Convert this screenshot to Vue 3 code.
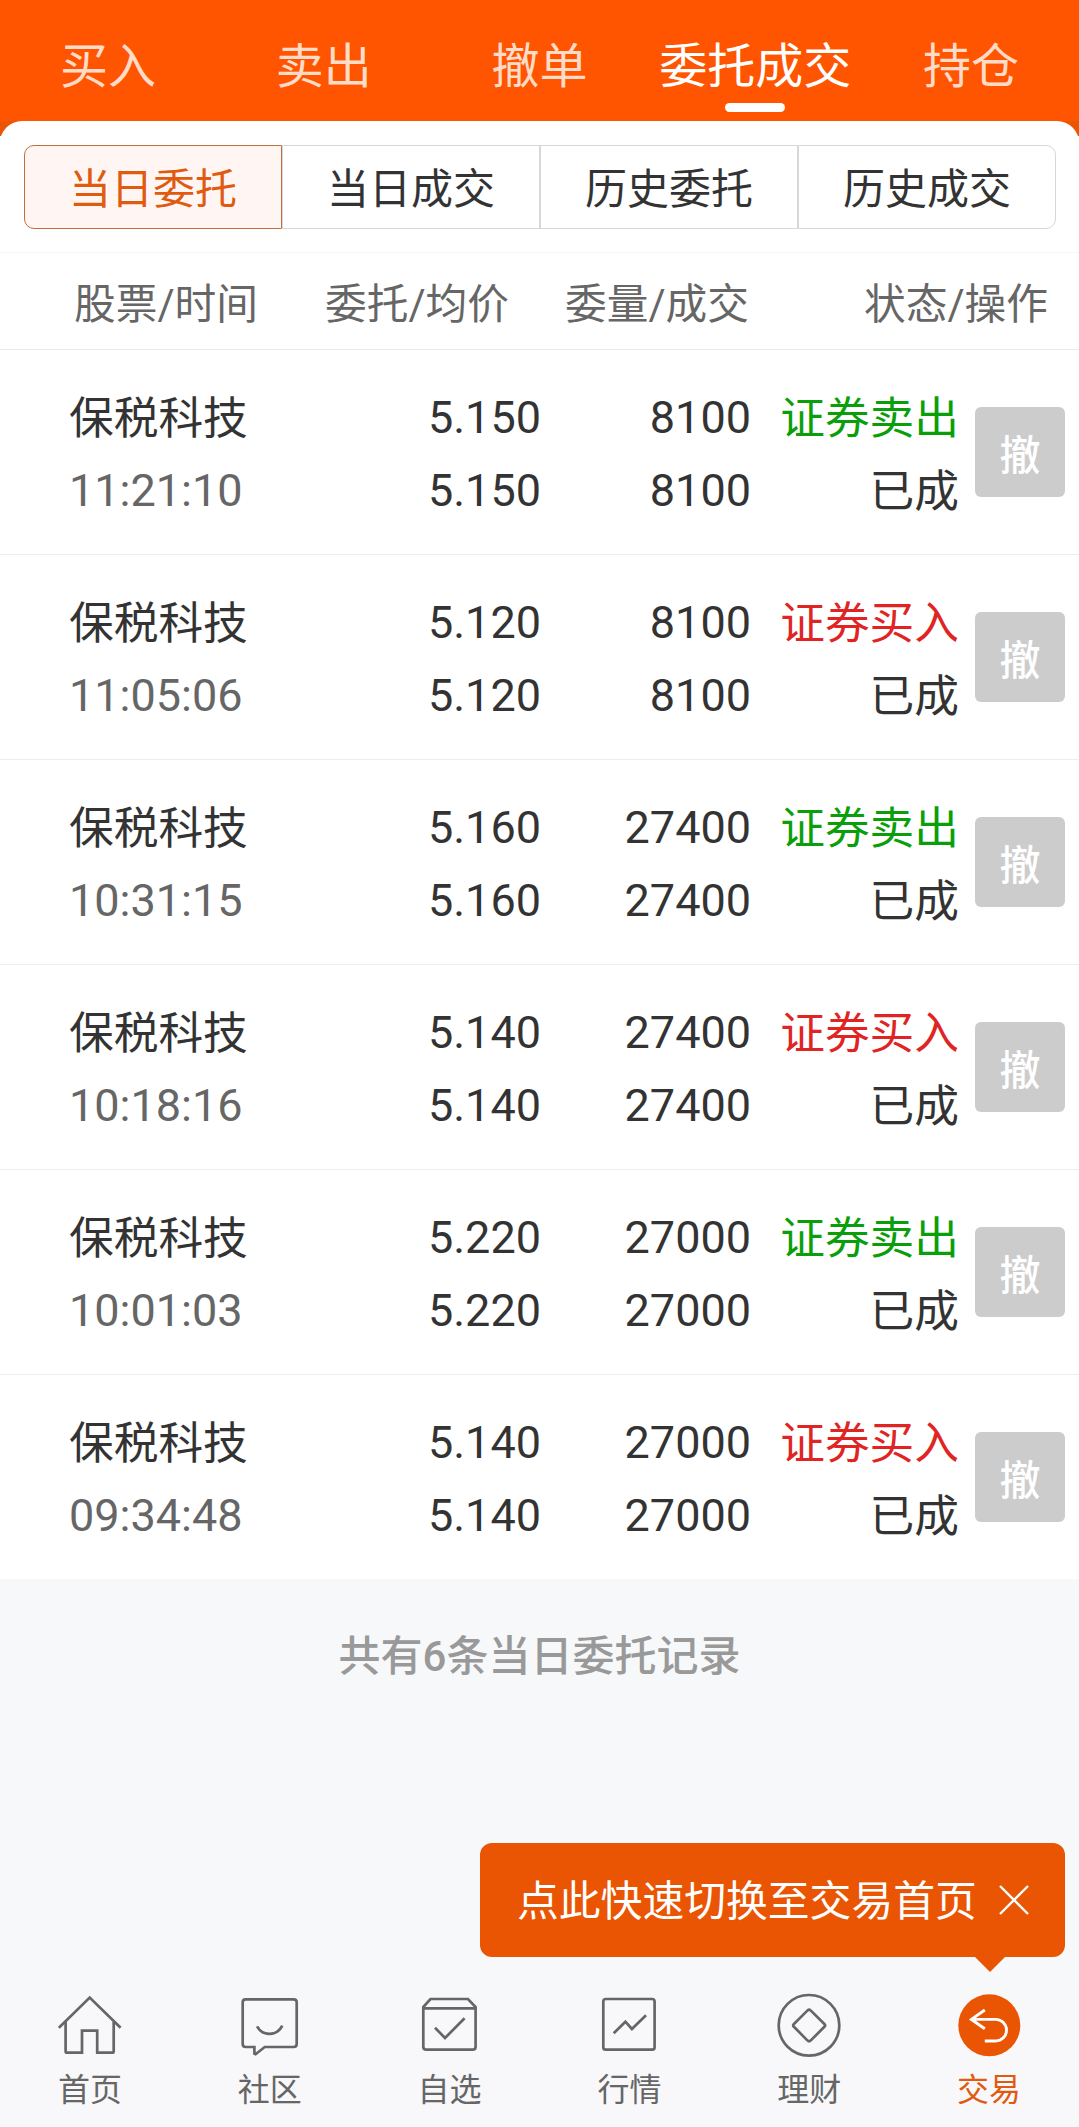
<template>
  <div class="page">
    <header class="top">
      <button
        v-for="t in tabs"
        :key="t"
        class="tab"
        :class="{ active: t === activeTab }"
        @click="activeTab = t"
      >{{ t }}</button>
    </header>

    <div class="corners"><div class="sheet-top"></div></div>

    <main class="sheet">
      <div class="segment">
        <button
          v-for="s in segments"
          :key="s"
          :class="{ active: s === activeSegment }"
          @click="activeSegment = s"
        >{{ s }}</button>
      </div>

      <div class="list-head">
        <span v-for="c in columns" :key="c">{{ c }}</span>
      </div>

      <div v-for="o in orders" :key="o.time" class="order">
        <div class="cell left">
          <div class="cjk">保税科技</div>
          <div class="muted">{{ o.time }}</div>
        </div>
        <div class="cell">
          <div>{{ o.price }}</div>
          <div>{{ o.price }}</div>
        </div>
        <div class="cell">
          <div>{{ o.amount }}</div>
          <div>{{ o.amount }}</div>
        </div>
        <div class="cell">
          <div class="cjk" :class="o.side">{{ o.side === 'sell' ? '证券卖出' : '证券买入' }}</div>
          <div class="cjk">已成</div>
        </div>
        <button class="cancel" disabled>撤</button>
      </div>
    </main>

    <p class="summary">共有{{ orders.length }}条当日委托记录</p>

    <footer class="bottom">
      <div v-if="showTip" class="tip">
        <span>点此快速切换至交易首页</span>
        <svg class="close" viewBox="0 0 30 30" @click="showTip = false">
          <path d="M1 1L29 29M29 1L1 29" />
        </svg>
      </div>

      <nav class="nav">
        <a class="nav-item">
          <svg viewBox="0 0 64 64">
            <path d="M.9 34.8L31.7 4.6L62.6 34.8" />
            <path d="M7.6 29V58.2Q7.6 59.7 9.1 59.7H24V37.7H39.2V59.7H54.2Q55.7 59.7 55.7 58.2V29" />
          </svg>
          <span>首页</span>
        </a>
        <a class="nav-item">
          <svg viewBox="0 0 64 64">
            <path d="M7.7 6.3H55.7Q58.7 6.3 58.7 9.3V51Q58.7 54 55.7 54H26.7L17.6 61.2L16.4 60.6V54H7.7Q4.7 54 4.7 51V9.3Q4.7 6.3 7.7 6.3Z" />
            <path d="M19.1 33.4C24.5 43.4 38.9 43.4 44.3 32.6" />
          </svg>
          <span>社区</span>
        </a>
        <a class="nav-item">
          <svg viewBox="0 0 64 64">
            <path d="M5.3 14L12.5 6H50L57.6 14V53.7Q57.6 56.7 54.6 56.7H8.3Q5.3 56.7 5.3 53.7ZM5.3 15.3H57.6" />
            <path d="M17 34.7L27 45L46.6 25.3" />
          </svg>
          <span>自选</span>
        </a>
        <a class="nav-item">
          <svg viewBox="0 0 64 64">
            <rect x="6.3" y="6" width="51.3" height="50.7" rx="2.5" />
            <path d="M16.7 40.3L28.4 28.7L34.9 36L49 22.2" />
          </svg>
          <span>行情</span>
        </a>
        <a class="nav-item">
          <svg viewBox="0 0 64 64">
            <circle cx="32" cy="32.3" r="30.3" />
            <path d="M30.6 17.4Q32.1 16 33.6 17.4L47.4 31Q48.8 32.4 47.4 33.8L33.6 47.6Q32.1 49 30.6 47.6L16.9 33.8Q15.5 32.4 16.9 31Z" />
          </svg>
          <span>理财</span>
        </a>
        <a class="nav-item current">
          <svg viewBox="0 0 64 64">
            <circle class="disc" cx="32.3" cy="32.3" r="31" />
            <path class="back" d="M27.8 17L14.4 26.4L27.8 35.7M14.4 26.4H38.7A10.8 10.8 0 0 1 38.7 48H27.8" />
          </svg>
          <span>交易</span>
        </a>
      </nav>
    </footer>
  </div>
</template>

<script setup>
import { ref } from 'vue';

const tabs = ['买入', '卖出', '撤单', '委托成交', '持仓'];
const segments = ['当日委托', '当日成交', '历史委托', '历史成交'];
const columns = ['股票/时间', '委托/均价', '委量/成交', '状态/操作'];

const activeTab = ref('委托成交');
const activeSegment = ref('当日委托');
const showTip = ref(true);

const orders = [
  { time: '11:21:10', price: '5.150', amount: 8100, side: 'sell' },
  { time: '11:05:06', price: '5.120', amount: 8100, side: 'buy' },
  { time: '10:31:15', price: '5.160', amount: 27400, side: 'sell' },
  { time: '10:18:16', price: '5.140', amount: 27400, side: 'buy' },
  { time: '10:01:03', price: '5.220', amount: 27000, side: 'sell' },
  { time: '09:34:48', price: '5.140', amount: 27000, side: 'buy' },
];
</script>

<style>
body{ margin:0; background:#f7f8fa;}
</style>

<style scoped>
.page{ display:flex; flex-direction:column; height:2127px; background:#f7f8fa; color:#333; font-family: Roboto, "Noto Sans CJK SC", sans-serif;}
button{ margin:0; padding:0; border:0; background:none; font:inherit; color:inherit;}

.top{ display:grid; grid-template-columns:repeat(5, 1fr); height:121px; background:#ff5500;}
.tab{ position:relative; height:121px; padding-top:12px; box-sizing:border-box; font-size:48px; line-height:109px; white-space:nowrap; color:#ffdbc8;}
.tab.active{ color:#fff;}
.tab.active::after{ content:""; position:absolute; left:50%; top:103px; width:60px; height:9px; margin-left:-30px; border-radius:5px; background:#fff;}

.corners{ height:15px; background:#ea5504; overflow:hidden;}
.sheet-top{ height:30px; border-radius:22px 22px 0 0; background:#fff;}

.sheet{ background:#fff;}
.segment{ display:grid; grid-template-columns:repeat(4, 1fr); height:84px; margin:0 23px 0 24px; padding:9px 0 23px;}
.segment button{ padding-top:6px; border:1px solid #d5d7d9; font-size:42px; line-height:76px;}
.segment button:first-child{ border-radius:10px 0 0 10px;}
.segment button:last-child{ border-radius:0 10px 10px 0;}
.segment .active{ border-color:#c0703f; background:#fff6f3; color:#e05a10;}

.list-head{ display:grid; grid-template-columns:258px 251px 240px 299px; height:96px; border-top:1px solid #f5f5f5; border-bottom:1px solid #ebebeb; font-size:41.7px; line-height:103px; text-align:right; color:#666;}

.order{ display:grid; grid-template-columns:232px 240px 210px 208px 90px; box-sizing:border-box; height:205px; padding:31px 14px 0 69px; border-bottom:1px solid #ededed; font-size:45px; line-height:73px;}
.order:last-child{ border-bottom-color:#f7f8fa;}
.cell{ text-align:right; white-space:nowrap;}
.cjk{ padding-top:4px; font-size:44.7px; line-height:69px;}
.left{ text-align:left;}
.muted{ color:#666;}
.sell{ color:#0a9f0a;}
.buy{ color:#e02424;}
.cancel{ width:90px; height:90px; margin:26px 0 0 16px; border-radius:6px; background:#ccc; color:#fff; font-size:41px; font-weight:500; line-height:90px; padding-top:4px;}

.summary{ margin:50px 0 0; font-size:42px; font-weight:500; line-height:54px; text-align:center; color:#999;}

.bottom{ position:relative; margin-top:auto; padding-bottom:17px; background:#f8f8fa;}
.tip{ position:absolute; right:14px; bottom:170px; display:flex; align-items:center; box-sizing:border-box; width:585px; height:114px; padding:0 36px 0 37px; justify-content:space-between; border-radius:12px; background:#ea5504; color:#fff; font-size:41.8px;}
.tip span{ padding-bottom:5px;}
.tip::after{ content:""; position:absolute; right:60px; top:100%; border:15px solid transparent; border-top-color:#ea5504; border-bottom:0;}
.close{ width:30px; height:30px; fill:none; stroke:#fff; stroke-width:2.4;}

.nav{ display:grid; grid-template-columns:repeat(6, 1fr);}
.nav-item{ display:flex; flex-direction:column; align-items:center; color:#666; font-size:32px; line-height:40px;}
.nav-item svg{ width:64px; height:64px; margin-bottom:13px; fill:none; stroke:#666; stroke-width:2.7;}
.nav-item.current{ color:#e25a10;}
.nav-item .disc{ fill:#ea5504; stroke:none;}
.nav-item .back{ stroke:#fff; stroke-width:2.9;}
</style>
